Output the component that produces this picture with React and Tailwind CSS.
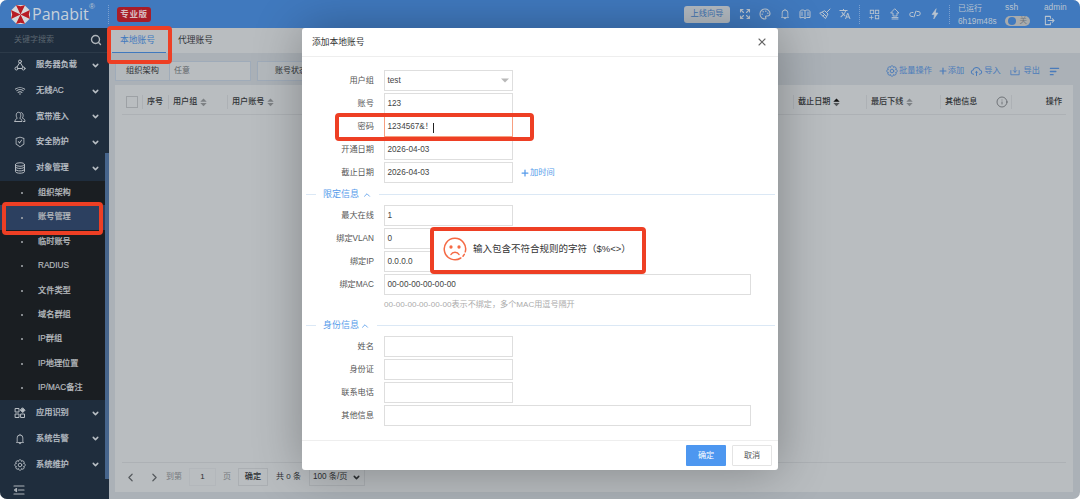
import { AiOutlineAppstoreAdd, AiOutlineBell, AiOutlineCloudUpload, AiOutlineSafetyCertificate, AiOutlineWifi } from "react-icons/ai"
import { MdTranslate } from "react-icons/md"
import { ChevronDown, ChevronLeft, ChevronRight, ChevronUp, Info, Palette, Plus, Search, X } from "lucide-react"

const Svg = ({ size = 12, sw = 1.5, children, className }) => (
  <svg width={size} height={size} viewBox="0 0 24 24" fill="none" stroke="currentColor" strokeWidth={sw} strokeLinecap="round" strokeLinejoin="round" className={className}>
    {children}
  </svg>
)

const Logo = () => (
  <svg width="19" height="19" viewBox="-12 -12 24 24">
    <polygon points="-5,-12 5,-12 12,-5 12,5 5,12 -5,12 -12,5 -12,-5" fill="#d5d8da" />
    {[0, 90, 180, 270].map((a) => (
      <path key={a} d="M0 0L-5.8-12L0-10.5L5.8-12Z" fill="#b81c24" transform={`rotate(${a})`} />
    ))}
  </svg>
)

const ExpandIcon = () => (
  <Svg sw={2.2}>
    <path d="M3 8V3h5M3 3l6 6M16 3h5v5M21 3l-6 6M3 16v5h5M3 21l6-6M21 16v5h-5M21 21l-6-6" />
  </Svg>
)
const BookIcon = () => (
  <Svg sw={2}>
    <path d="M12 6v14M2 19V8c0-5 8-5 10-2c2-3 10-3 10 2v11h-7l-3 2l-3-2zM6 8v7M18 8v7" />
  </Svg>
)
const BroomIcon = () => (
  <Svg sw={2}>
    <path d="M22 2l-7 7M12 6l6 6l-5 9L2 11zM7 9l8 8M8 16l2-2" />
  </Svg>
)
const UpIcon = () => (
  <Svg sw={1.8}>
    <path d="M12 2l8 8h-4v6H8v-6H4zM6 19h12M6 22h12" />
  </Svg>
)
const CodeIcon = () => (
  <Svg sw={2}>
    <path d="M8 17H6a4 4 0 0 1-1-8h3M16 7h2a4 4 0 0 1 1 8h-3M10 18l4-12" />
  </Svg>
)
const BoltIcon = () => (
  <Svg sw={1.2}>
    <path d="M14 2L6 13h5l-1.5 9L18 10h-5z" fill="currentColor" />
  </Svg>
)
const ExitIcon = () => (
  <Svg size={11} sw={2.2}>
    <path d="M14 7V3H3v18h11v-4M9 12h13M18 8l4 4l-4 4" />
  </Svg>
)
const AppIcon = () => (
  <Svg sw={2}>
    <path d="M3 3h7v7H3zM3 14h7v7H3zM14 14h7v7h-7z" />
    <path d="M17.5 2l4.5 4.5l-4.5 4.5l-4.5-4.5z" fill="currentColor" />
  </Svg>
)
const GearIcon = ({ className }) => (
  <Svg sw={1.8} className={className}>
    <circle cx="12" cy="12" r="3.6" />
    {[0, 45, 90, 135, 180, 225, 270, 315].map((a) => (
      <path key={a} d="M8.7 4.1C8.7 0.5 15.3 0.5 15.3 4.1" transform={`rotate(${a} 12 12)`} />
    ))}
  </Svg>
)
const NetIcon = () => (
  <Svg sw={2}>
    <circle cx="12" cy="5" r="3" />
    <circle cx="5" cy="19" r="3" />
    <circle cx="19" cy="19" r="3" />
    <path d="M11 8L6 16M13 8l5 8M8 19h8" />
  </Svg>
)
const UserIcon = () => (
  <Svg sw={1.9}>
    <path d="M2 21h14c0-4-2-5-4.500-6.500c3-3 3-12-2.500-12s-5.500 9-2.500 12C4 16 2 17 2 21zM14 3c5 0 5.500 8 2.500 11c3 1 5.500 3 5.500 7h-3" />
  </Svg>
)
const DbIcon = () => (
  <Svg sw={1.9}>
    <ellipse cx="12" cy="5" rx="9" ry="3.5" />
    <path d="M3 5v14c0 4.5 18 4.5 18 0V5M3 10c0 4 18 4 18 0M3 15c0 4 18 4 18 0" />
  </Svg>
)

const menuTop = [
  { label: "服务器负载", icon: <NetIcon /> },
  { label: "无线AC", icon: <AiOutlineWifi size={12} /> },
  { label: "宽带准入", icon: <UserIcon /> },
  { label: "安全防护", icon: <AiOutlineSafetyCertificate size={12} /> },
  { label: "对象管理", icon: <DbIcon /> },
]
const menuBottom = [
  { label: "应用识别", icon: <AppIcon /> },
  { label: "系统告警", icon: <AiOutlineBell size={12} /> },
  { label: "系统维护", icon: <GearIcon /> },
]
const subMenu = ["组织架构", "账号管理", "临时账号", "RADIUS", "文件类型", "域名群组", "IP群组", "IP地理位置", "IP/MAC备注"]

const MenuItem = ({ item }) => (
  <div className="flex h-[25.7px] items-center pl-[14px] text-[#b9bfc5]">
    <span className="w-[22px]">{item.icon}</span>
    <span className="flex-1 text-[8.2px] font-medium [-webkit-text-stroke:0.2px]">{item.label}</span>
    <ChevronDown size={9} strokeWidth={4} className="mr-[5px]" />
  </div>
)

const Sort = ({ up }) => (
  <svg width="7" height="9" viewBox="0 0 7 9" className="ml-[3px]">
    <path d="M0.3 3.8L3.5 0.6L6.7 3.8Z" fill={up ? "#111" : "#7d8184"} />
    <path d="M0.3 5L3.5 8.2L6.7 5Z" fill={up ? "#53575a" : "#7d8184"} />
  </svg>
)

const Th = ({ className, children }) => (
  <div className={`flex h-[14px] shrink-0 items-center border-r border-[#adb1b5] pl-[4px] ${className}`}>{children}</div>
)

const Field = ({ label, value, wide, focus, children }) => (
  <div className="flex h-[23px] items-start text-[8.2px]">
    <div className="flex h-[21px] w-[72px] shrink-0 items-center justify-end pt-px">{label}</div>
    <div className={`ml-[9.5px] flex h-[21px] shrink-0 items-center border pt-[2px] pl-[3px] text-[#444] ${wide ? "w-[367px]" : "w-[129.5px]"} ${focus ? "border-[#f79f80]" : "border-[#dedede]"}`}>
      {value}
    </div>
    {children}
  </div>
)

const Section = ({ title, gap }) => (
  <div className="flex h-[11px] items-center text-[9px] text-[#559bea]">
    <div className="ml-[4px] mr-[7px] h-px w-[10px] bg-[#dbe8f5]" />
    {title}
    <ChevronUp size={10} strokeWidth={2} className={gap} />
    <div className="mr-[3px] ml-[7px] h-px flex-1 bg-[#dbe8f5]" />
  </div>
)

export default function App() {
  return (
    <div className="bg-white">
      <div className="relative h-[499px] w-[1080px] overflow-hidden rounded-[7px] bg-[#abb1b7] font-['Liberation_Sans','Noto_Sans_CJK_SC',sans-serif] text-[8px] leading-none whitespace-nowrap text-[#303336]">
        {/* Header */}
        <header className="flex h-[28px] items-center bg-[#4079be] text-[#b9c4d0]">
          <div className="ml-[11px]">
            <Logo />
          </div>
          <span className="ml-[2px] w-[57px] font-['Open_Sans',sans-serif] text-[16px] text-[#c6d0da]">Panabit</span>
          <span className="mb-[14px] w-[19px] text-[8px]">®</span>
          <div className="h-[19px] border-l border-dotted border-[#7ba0cf]" />
          <div className="ml-[8px] flex h-[15px] w-[34px] items-center justify-center rounded-[3px] bg-[#a81d28] text-[8.5px] font-semibold tracking-[0.6px] text-[#d9bfc2]">专业版</div>
          <div className="ml-[533px] flex h-[17px] w-[46px] items-center justify-center rounded-[3px] bg-[#b5bcc3] pt-px text-[8.2px] text-[#3f73b3]">上线向导</div>
          <div className="ml-[9px] flex items-center gap-[8px]">
            <ExpandIcon />
            <Palette size={12} strokeWidth={2.2} />
            <AiOutlineBell size={12} />
            <BookIcon />
            <BroomIcon />
            <MdTranslate size={12} />
          </div>
          <div className="ml-[8px] h-[19px] border-l border-dotted border-[#7ba0cf]" />
          <div className="ml-[8px] flex items-center gap-[8px]">
            <AiOutlineAppstoreAdd size={13} />
            <UpIcon />
            <CodeIcon />
            <BoltIcon />
          </div>
          <div className="ml-[8px] h-[19px] border-l border-dotted border-[#7ba0cf]" />
          <div className="ml-[8px] flex w-[47px] flex-col gap-[4px] pt-[2px]">
            <span>已运行</span>
            <span className="text-[8.3px]">6h19m48s</span>
          </div>
          <div className="flex w-[39px] flex-col gap-[4px] pt-px">
            <span className="text-[8.5px]">ssh</span>
            <div className="flex h-[10px] w-[25px] items-center justify-between rounded-full bg-[#a9abac] px-[3px] text-[7.5px] text-[#70777e]">
              <div className="h-[8px] w-[8px] rounded-full bg-[#4079be]" />关
            </div>
          </div>
          <div className="flex flex-col gap-[3px] pt-px">
            <span className="text-[8.3px]">admin</span>
            <ExitIcon />
          </div>
        </header>

        <div className="flex h-[471px]">
          {/* Sidebar */}
          <aside className="flex w-[109px] shrink-0 flex-col bg-[#1f2d3d]">
            <div className="flex h-[24.5px] items-center justify-between border-b border-[#2c3a49] pr-[7px] pl-[14px] text-[#5b6670]">
              关键字搜索
              <Search size={12} strokeWidth={2.8} className="text-[#aeb4ba]" />
            </div>
            <div className="flex">
              <div className="w-[105px]">
                {menuTop.map((item) => (
                  <MenuItem key={item.label} item={item} />
                ))}
                <div className="bg-[#1a1e22] text-[#b3b7bb]">
                  {subMenu.map((name) => (
                    <div key={name} className={`flex h-[24.4px] items-center pl-[21px] text-[8.2px] font-medium [-webkit-text-stroke:0.2px] ${name === "账号管理" ? "bg-[#2c4060]" : ""}`}>
                      <span className="mr-[15px] h-[2px] w-[2px] rounded-full bg-[#a9adb1]" />
                      {name}
                    </div>
                  ))}
                </div>
                {menuBottom.map((item) => (
                  <MenuItem key={item.label} item={item} />
                ))}
              </div>
              <div className="mt-[100px] h-[326px] w-[4px] bg-[#47658c]" />
            </div>
            <Svg size={12} sw={2.4} className="mt-[5px] ml-[13px] text-[#aeb4ba]">
              <path d="M2 4h20M11 12h11M2 20h20M7 9l-4 3l4 3z" />
            </Svg>
          </aside>

          {/* Content */}
          <main className="flex-1">
            <div className="flex h-[25px] bg-[#b9bdc0] pl-[3px] text-[8.75px]">
              <div className="flex w-[54px] items-center justify-center border-b-[1.5px] border-[#4079be] pr-[3px] text-[#4079be]">本地账号</div>
              <div className="ml-[12px] flex items-center">代理账号</div>
            </div>

            <div className="flex h-[31.5px] items-center pt-[3.5px] pl-[6px]">
              <div className="flex h-[20px] w-[55px] items-center justify-center border border-[#9fabb9] bg-[#b4b9bd] pt-px text-[8.2px]">组织架构</div>
              <div className="flex h-[20px] w-[81px] items-center border border-l-0 border-[#9fabb9] bg-[#b9bdc0] pt-px pl-[4px] text-[#606569]">任意</div>
              <div className="ml-[6px] flex h-[20px] w-[65px] items-center border border-[#9fabb9] bg-[#b4b9bd] pl-[17px]">账号状态</div>
              <div className="ml-auto flex items-center pt-px text-[8.2px] text-[#4a7bba]">
                <GearIcon className="mr-px -ml-px" />
                批量操作
                <Plus size={10} strokeWidth={2.8} className="ml-[6px]" />
                添加
                <AiOutlineCloudUpload size={13} className="mr-[1px] ml-[6px]" />
                导入
                <Svg size={10} sw={2} className="mr-[4px] ml-[9px]">
                  <path d="M2 11v10h20V11M12 3v12M8 11l4 4l4-4" />
                </Svg>
                导出
                <Svg size={11} sw={2.8} className="mr-[20px] ml-[9px]">
                  <path d="M3 5h18M3 12h12M3 19h6" />
                </Svg>
              </div>
            </div>

            <div className="ml-[6px] flex h-[407px] w-[958px] flex-col bg-[#b9bdc0]">
              <div className="mx-[7px] flex h-[30px] items-center border-b border-[#adb1b5] pt-[6px] text-[8.1px] font-medium">
                <Th className="w-[21px]">
                  <div className="h-[12px] w-[12px] border border-[#9da1a5]" />
                </Th>
                <Th className="w-[26px]">序号</Th>
                <Th className="w-[59px]">用户组<Sort /></Th>
                <Th className="w-[566px]">用户账号<Sort /></Th>
                <Th className="w-[73px]">截止日期<Sort up /></Th>
                <Th className="w-[74px]">最后下线<Sort /></Th>
                <Th className="w-[71px]">
                  其他信息
                  <Info size={12} strokeWidth={1.6} className="ml-[19px] text-[#5c6064]" />
                </Th>
                <span className="ml-auto pr-[4px]">操作</span>
              </div>
              <div className="flex-1" />
              <div className="mx-[7px] flex h-[30px] items-center border-t border-[#adb1b5] text-[#2d3033]">
                <ChevronLeft size={13} strokeWidth={2.2} className="ml-[2px] text-[#55595d]" />
                <ChevronRight size={13} strokeWidth={2.2} className="ml-[11px] text-[#55595d]" />
                <span className="ml-[5px] text-[#777b7f]">到第</span>
                <div className="ml-[7px] flex h-[18px] w-[27px] items-center justify-center border border-[#b3b7bb]">1</div>
                <span className="ml-[7px] text-[#777b7f]">页</span>
                <div className="ml-[7px] flex h-[18px] w-[30px] items-center justify-center border border-[#abafb3] pt-px text-[8.2px] font-medium">确定</div>
                <span className="ml-[8px]">共 0 条</span>
                <div className="ml-[8px] flex h-[18px] items-center border border-[#abafb3] px-[3px] pt-px text-[8.2px]">
                  100 条/页
                  <ChevronDown size={9} strokeWidth={4} className="ml-[4px]" />
                </div>
              </div>
            </div>
          </main>
        </div>

        {/* Modal */}
        <div className="absolute top-[28px] left-[302px] flex h-[442px] w-[476px] flex-col rounded-[3px] bg-white text-[#555] shadow-[1px_1px_50px_rgba(0,0,0,0.3)]">
          <div className="flex h-[29px] items-center justify-between border-b border-[#eee] px-[10px] text-[8.75px] text-[#333]">
            添加本地账号
            <X size={12} strokeWidth={2.2} className="text-[#666]" />
          </div>
          <div className="h-[355px] pt-[13px]">
            <Field label="用户组" value="test">
              <svg width="8" height="5" viewBox="0 0 8 5" className="mt-[8px] -ml-[12px]">
                <path d="M0 0.5H8L4 4.5Z" fill="#b8b8b8" />
              </svg>
            </Field>
            <Field label="账号" value="123" />
            <Field
              label="密码"
              focus
              value={
                <>
                  1234567&amp;！
                  <span className="h-[10px] w-px bg-[#222]" />
                </>
              }
            />
            <Field label="开通日期" value="2026-04-03" />
            <Field label="截止日期" value="2026-04-03">
              <div className="ml-[7px] flex h-[21px] items-center pt-px text-[#559bea]">
                <Plus size={10} strokeWidth={3} />
                加时间
              </div>
            </Field>
            <div className="pt-[4px] pb-[5px]">
              <Section title="限定信息" gap="ml-[3px]" />
            </div>
            <Field label="最大在线" value="1" />
            <Field label="绑定VLAN" value="0" />
            <Field label="绑定IP" value="0.0.0.0" />
            <Field label="绑定MAC" value="00-00-00-00-00-00" wide />
            <div className="flex h-[15px] items-center pt-[2px] pl-[82px] text-[8.1px] text-[#aaa]">00-00-00-00-00-00表示不绑定，多个MAC用逗号隔开</div>
            <div className="pt-[8px] pb-[5px]">
              <Section title="身份信息" gap="ml-[1px]" />
            </div>
            <Field label="姓名" />
            <Field label="身份证" />
            <Field label="联系电话" />
            <Field label="其他信息" wide />
          </div>
          <div className="mt-auto flex h-[30px] items-center justify-end gap-[6px] border-t border-[#eee] pr-[6px] pb-px text-[8.1px]">
            <div className="flex h-[21px] w-[40px] items-center justify-center rounded-[1px] bg-[#4d97f0] pt-[2px] text-white">确定</div>
            <div className="flex h-[21px] w-[40px] items-center justify-center rounded-[1px] border border-[#e4e4e4] pt-[2px]">取消</div>
          </div>
        </div>

        {/* Error toast */}
        <div className="absolute top-[227px] left-[430px] flex h-[47px] w-[216px] items-center rounded-[4px] border-[4.5px] border-[#ee3f24] bg-white pb-[3px] pl-[9px] text-[9.5px] text-[#333]">
          <Svg size={24} sw={1.5} className="mr-[6px] text-[#f56a45]">
            <path d="M22.3 14.8A10.7 10.7 0 1 0 17.8 21M20 19.2L21.3 17.4M8 17.5c1.5-3 6.5-3 8 0" />
            <circle cx="8" cy="10" r="0.9" fill="currentColor" />
            <circle cx="16" cy="10" r="0.9" fill="currentColor" />
          </Svg>
          输入包含不符合规则的字符（$%&lt;&gt;）
        </div>

        {/* Highlight frames */}
        <div className="absolute top-[26px] left-[107px] h-[38px] w-[65px] rounded-[4px] border-[4.5px] border-[#ee3f24]" />
        <div className="absolute top-[202px] left-[2px] h-[33px] w-[101px] rounded-[4px] border-[4.5px] border-[#ee3f24]" />
        <div className="absolute top-[113px] left-[335px] h-[28px] w-[199px] rounded-[4px] border-[4.5px] border-[#ee3f24]" />
      </div>
    </div>
  )
}
